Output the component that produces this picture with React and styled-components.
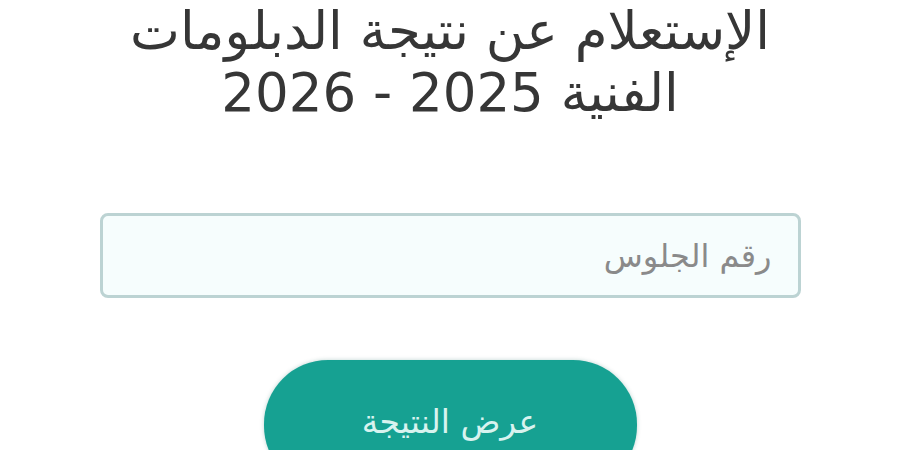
import React from 'react'
import styled, { createGlobalStyle } from 'styled-components'

const GlobalStyle = createGlobalStyle`
  html, body {
    margin: 0;
    padding: 0;
    background: #fff;
  }
  body {
    font-family: "DejaVu Sans", "Noto Sans", sans-serif;
  }
`

const App = () => {
  return (
    <Page dir="rtl">
      <GlobalStyle />
      <Title>
        الإستعلام عن نتيجة الدبلومات
        <br />
        الفنية 2025 - 2026
      </Title>
      <SeatField>
        <SeatInput type="text" placeholder="رقم الجلوس" />
      </SeatField>
      <ShowButton type="button">عرض النتيجة</ShowButton>
    </Page>
  )
}

export default App

const Page = styled.div`
  width: 900px;
  height: 450px;
  overflow: hidden;
  display: flex;
  flex-direction: column;
  align-items: center;
  background: #fff;
`

const Title = styled.h1`
  margin: 0;
  font-family: "DejaVu Sans", sans-serif;
  font-size: 53px;
  font-weight: 400;
  line-height: 62px;
  color: #363636;
  text-align: center;
  white-space: nowrap;
`

const SeatField = styled.div`
  margin-top: 89px;
  width: 701px;
`

const SeatInput = styled.input`
  box-sizing: border-box;
  width: 100%;
  height: 85px;
  border: 3px solid #bcd3d3;
  border-radius: 8px;
  background: #f6fdfd;
  padding: 0 26px;
  font-family: "DejaVu Sans", sans-serif;
  font-size: 32px;
  color: #333;
  outline: none;
  &::placeholder {
    color: #8a8a8a;
  }
`

const ShowButton = styled.button`
  margin-top: 62px;
  flex-shrink: 0;
  width: 373px;
  height: 130px;
  border: none;
  border-radius: 64px;
  background: #16a192;
  color: #d8f3ef;
  font-family: "DejaVu Sans", sans-serif;
  font-size: 33px;
  padding-bottom: 8px;
  box-shadow: 0 0 4px rgba(0, 90, 80, 0.25);
`
